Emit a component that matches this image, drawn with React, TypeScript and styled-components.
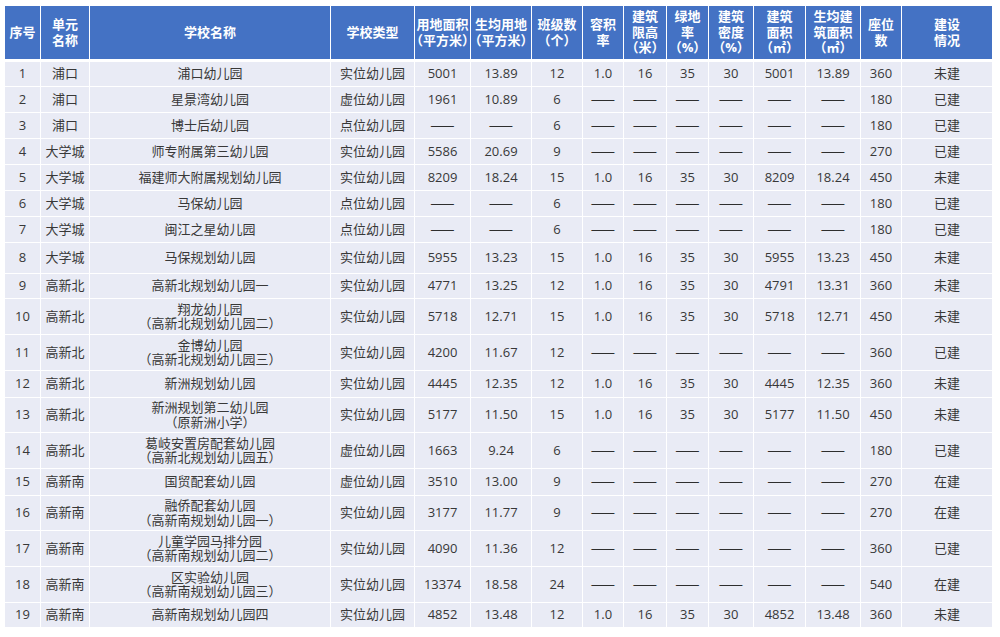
import styled, { createGlobalStyle } from "styled-components";

const GlobalStyle = createGlobalStyle`
  html, body {
    margin: 0;
    padding: 0;
    background: #ffffff;
  }
  body {
    font-family: "Open Sans", "Noto Sans CJK SC", sans-serif;
  }
`;

const D = "——";

const COL_WIDTHS = [35, 48, 240, 83, 55, 60, 50, 40, 42, 41, 44, 51, 54, 40, 90];

const HEADERS: string[][] = [
  ["序号"],
  ["单元", "名称"],
  ["学校名称"],
  ["学校类型"],
  ["用地面积", "（平方米）"],
  ["生均用地", "（平方米）"],
  ["班级数", "（个）"],
  ["容积", "率"],
  ["建筑", "限高", "（米）"],
  ["绿地", "率", "（%）"],
  ["建筑", "密度", "（%）"],
  ["建筑", "面积", "（㎡）"],
  ["生均建", "筑面积", "（㎡）"],
  ["座位", "数"],
  ["建设", "情况"],
];

type Row = {
  h: number;
  unit: string;
  name: string[];
  kind: string;
  area: string;
  perArea: string;
  classes: string;
  plan: string[];
  seats: string;
  status: string;
};

const NONE = [D, D, D, D, D, D];

const rows: Row[] = [
  { h: 24, unit: "浦口", name: ["浦口幼儿园"], kind: "实位幼儿园", area: "5001", perArea: "13.89", classes: "12", plan: ["1.0", "16", "35", "30", "5001", "13.89"], seats: "360", status: "未建" },
  { h: 25, unit: "浦口", name: ["星景湾幼儿园"], kind: "虚位幼儿园", area: "1961", perArea: "10.89", classes: "6", plan: NONE, seats: "180", status: "已建" },
  { h: 25, unit: "浦口", name: ["博士后幼儿园"], kind: "点位幼儿园", area: D, perArea: D, classes: "6", plan: NONE, seats: "180", status: "已建" },
  { h: 25, unit: "大学城", name: ["师专附属第三幼儿园"], kind: "实位幼儿园", area: "5586", perArea: "20.69", classes: "9", plan: NONE, seats: "270", status: "已建" },
  { h: 25, unit: "大学城", name: ["福建师大附属规划幼儿园"], kind: "实位幼儿园", area: "8209", perArea: "18.24", classes: "15", plan: ["1.0", "16", "35", "30", "8209", "18.24"], seats: "450", status: "未建" },
  { h: 25, unit: "大学城", name: ["马保幼儿园"], kind: "点位幼儿园", area: D, perArea: D, classes: "6", plan: NONE, seats: "180", status: "已建" },
  { h: 25, unit: "大学城", name: ["闽江之星幼儿园"], kind: "点位幼儿园", area: D, perArea: D, classes: "6", plan: NONE, seats: "180", status: "已建" },
  { h: 30, unit: "大学城", name: ["马保规划幼儿园"], kind: "实位幼儿园", area: "5955", perArea: "13.23", classes: "15", plan: ["1.0", "16", "35", "30", "5955", "13.23"], seats: "450", status: "未建" },
  { h: 24, unit: "高新北", name: ["高新北规划幼儿园一"], kind: "实位幼儿园", area: "4771", perArea: "13.25", classes: "12", plan: ["1.0", "16", "35", "30", "4791", "13.31"], seats: "360", status: "未建" },
  { h: 35, unit: "高新北", name: ["翔龙幼儿园", "（高新北规划幼儿园二）"], kind: "实位幼儿园", area: "5718", perArea: "12.71", classes: "15", plan: ["1.0", "16", "35", "30", "5718", "12.71"], seats: "450", status: "未建" },
  { h: 35, unit: "高新北", name: ["金博幼儿园", "（高新北规划幼儿园三）"], kind: "实位幼儿园", area: "4200", perArea: "11.67", classes: "12", plan: NONE, seats: "360", status: "已建" },
  { h: 26, unit: "高新北", name: ["新洲规划幼儿园"], kind: "实位幼儿园", area: "4445", perArea: "12.35", classes: "12", plan: ["1.0", "16", "35", "30", "4445", "12.35"], seats: "360", status: "未建" },
  { h: 34, unit: "高新北", name: ["新洲规划第二幼儿园", "（原新洲小学）"], kind: "实位幼儿园", area: "5177", perArea: "11.50", classes: "15", plan: ["1.0", "16", "35", "30", "5177", "11.50"], seats: "450", status: "未建" },
  { h: 35, unit: "高新北", name: ["葛岐安置房配套幼儿园", "（高新北规划幼儿园五）"], kind: "虚位幼儿园", area: "1663", perArea: "9.24", classes: "6", plan: NONE, seats: "180", status: "已建" },
  { h: 26, unit: "高新南", name: ["国贸配套幼儿园"], kind: "虚位幼儿园", area: "3510", perArea: "13.00", classes: "9", plan: NONE, seats: "270", status: "在建" },
  { h: 34, unit: "高新南", name: ["融侨配套幼儿园", "（高新南规划幼儿园一）"], kind: "实位幼儿园", area: "3177", perArea: "11.77", classes: "9", plan: NONE, seats: "270", status: "在建" },
  { h: 35, unit: "高新南", name: ["儿童学园马排分园", "（高新南规划幼儿园二）"], kind: "实位幼儿园", area: "4090", perArea: "11.36", classes: "12", plan: NONE, seats: "360", status: "已建" },
  { h: 35, unit: "高新南", name: ["区实验幼儿园", "（高新南规划幼儿园三）"], kind: "实位幼儿园", area: "13374", perArea: "18.58", classes: "24", plan: NONE, seats: "540", status: "在建" },
  { h: 24, unit: "高新南", name: ["高新南规划幼儿园四"], kind: "实位幼儿园", area: "4852", perArea: "13.48", classes: "12", plan: ["1.0", "16", "35", "30", "4852", "13.48"], seats: "360", status: "未建" },
];

const Page = styled.div`
  width: 1000px;
  height: 637px;
  padding: 5px 0 0 4px;
  box-sizing: border-box;
  overflow: hidden;
`;

const Table = styled.table`
  width: 989px;
  table-layout: fixed;
  border-collapse: separate;
  border-spacing: 1px;
  background: #ffffff;
  font-family: "Open Sans", "Noto Sans CJK SC", sans-serif;
`;

const HeadRow = styled.tr`
  height: 55px;
`;

const HeadCell = styled.th`
  padding: 0;
  background: #4472c4;
  border-bottom: 2px solid #ffffff;
  color: #ffffff;
  font-size: 13px;
  font-weight: 700;
  overflow: hidden;
  vertical-align: middle;
`;

const Lines = styled.div<{ $lh: number }>`
  display: flex;
  flex-direction: column;
  align-items: center;
  line-height: ${(p) => p.$lh}px;

  span {
    white-space: nowrap;
  }
`;

const BodyRow = styled.tr<{ $h: number }>`
  height: ${(p) => p.$h}px;
`;

const Cell = styled.td`
  padding: 0 0 1px;
  background: #e9ebf5;
  color: #383838;
  font-size: 13px;
  line-height: 15px;
  text-align: center;
  vertical-align: middle;
  white-space: nowrap;
  overflow: hidden;
`;

const Dash = styled.span`
  font-family: "Noto Sans CJK SC", sans-serif;
  font-size: 14.5px;
  color: #2e2e2e;
`;

const Value = ({ v }: { v: string }) => (v === D ? <Dash>{v}</Dash> : <>{v}</>);

export default function App() {
  return (
    <Page>
      <GlobalStyle />
      <Table>
        <colgroup>
          {COL_WIDTHS.map((w, i) => (
            <col key={i} style={{ width: w }} />
          ))}
        </colgroup>
        <thead>
          <HeadRow>
            {HEADERS.map((lines, i) => (
              <HeadCell key={i}>
                <Lines $lh={15.5}>
                  {lines.map((l) => (
                    <span key={l}>{l}</span>
                  ))}
                </Lines>
              </HeadCell>
            ))}
          </HeadRow>
        </thead>
        <tbody>
          {rows.map((r, i) => (
            <BodyRow key={i} $h={r.h}>
              <Cell>{i + 1}</Cell>
              <Cell>{r.unit}</Cell>
              <Cell>
                <Lines $lh={14.5}>
                  {r.name.map((l) => (
                    <span key={l}>{l}</span>
                  ))}
                </Lines>
              </Cell>
              <Cell>{r.kind}</Cell>
              <Cell>
                <Value v={r.area} />
              </Cell>
              <Cell>
                <Value v={r.perArea} />
              </Cell>
              <Cell>{r.classes}</Cell>
              {r.plan.map((v, j) => (
                <Cell key={j}>
                  <Value v={v} />
                </Cell>
              ))}
              <Cell>{r.seats}</Cell>
              <Cell>{r.status}</Cell>
            </BodyRow>
          ))}
        </tbody>
      </Table>
    </Page>
  );
}
